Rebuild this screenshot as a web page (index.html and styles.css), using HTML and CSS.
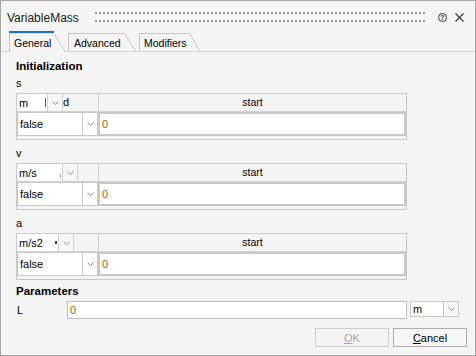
FILE: index.html
```html
<!DOCTYPE html>
<html>
<head>
<meta charset="utf-8">
<title>VariableMass</title>
<link rel="stylesheet" href="styles.css">
</head>
<body>
<div class="window">
  <div class="titlebar">
    <span class="title">VariableMass</span>
    <div class="grip"></div>
    <span class="help">?</span>
    <svg class="close" width="9" height="9" viewBox="0 0 9 9"><path d="M0.5 0.5L8.5 8.5M8.5 0.5L0.5 8.5" stroke="#333" stroke-width="1.1" fill="none"/></svg>
  </div>

  <div class="tabbar">
    <div class="tab tab-general">
      <svg class="tab-shape" width="57" height="21" viewBox="0 0 57 21"><path d="M0.5 21V2H44.5L56.5 21" fill="#f4f4f4" stroke="#c6c6c6"/><rect x="0" y="0" width="45" height="2" fill="#1f72b8"/></svg>
      <span class="tab-label">General</span>
    </div>
    <div class="tab tab-advanced">
      <svg class="tab-shape" width="68" height="18" viewBox="0 0 68 18"><path d="M0.5 18V0.5H56.5L67.5 18" fill="#f4f4f4" stroke="#c6c6c6"/></svg>
      <span class="tab-label">Advanced</span>
    </div>
    <div class="tab tab-modifiers">
      <svg class="tab-shape" width="61" height="18" viewBox="0 0 61 18"><path d="M0.5 18V0.5H50.5L60.5 18" fill="#f4f4f4" stroke="#c6c6c6"/></svg>
      <span class="tab-label">Modifiers</span>
    </div>
  </div>

  <div class="content">
    <div class="section-title">Initialization</div>

    <div class="var-label">s</div>
    <div class="vtable">
      <div class="vhead">
        <div class="vcol1">
          <div class="unit-combo w-s"><span>m</span><span class="tick"></span></div>
          <div class="unit-arrow"><svg width="7" height="4" viewBox="0 0 7 4"><path d="M0.5 0.5L3.5 3.5L6.5 0.5" fill="none" stroke="#8c8c8c"/></svg></div>
          <div class="hdr-fixed">d</div>
        </div>
        <div class="hdr-start">start</div>
      </div>
      <div class="vrow">
        <div class="fixed-combo">false</div>
        <div class="fixed-arrow"><svg width="7" height="4" viewBox="0 0 7 4"><path d="M0.5 0.5L3.5 3.5L6.5 0.5" fill="none" stroke="#8c8c8c"/></svg></div>
        <div class="value-cell">0</div>
      </div>
    </div>

    <div class="var-label gap">v</div>
    <div class="vtable">
      <div class="vhead">
        <div class="vcol1">
          <div class="unit-combo w-v"><span>m/s</span><span class="mark-green"></span></div>
          <div class="unit-arrow"><svg width="7" height="4" viewBox="0 0 7 4"><path d="M0.5 0.5L3.5 3.5L6.5 0.5" fill="none" stroke="#8c8c8c"/></svg></div>
          <div class="hdr-fixed"></div>
        </div>
        <div class="hdr-start">start</div>
      </div>
      <div class="vrow">
        <div class="fixed-combo">false</div>
        <div class="fixed-arrow"><svg width="7" height="4" viewBox="0 0 7 4"><path d="M0.5 0.5L3.5 3.5L6.5 0.5" fill="none" stroke="#8c8c8c"/></svg></div>
        <div class="value-cell">0</div>
      </div>
    </div>

    <div class="var-label gap">a</div>
    <div class="vtable">
      <div class="vhead">
        <div class="vcol1">
          <div class="unit-combo w-a"><span>m/s2</span><span class="mark-red"></span></div>
          <div class="unit-arrow"><svg width="7" height="4" viewBox="0 0 7 4"><path d="M0.5 0.5L3.5 3.5L6.5 0.5" fill="none" stroke="#8c8c8c"/></svg></div>
          <div class="hdr-fixed"></div>
        </div>
        <div class="hdr-start">start</div>
      </div>
      <div class="vrow">
        <div class="fixed-combo">false</div>
        <div class="fixed-arrow"><svg width="7" height="4" viewBox="0 0 7 4"><path d="M0.5 0.5L3.5 3.5L6.5 0.5" fill="none" stroke="#8c8c8c"/></svg></div>
        <div class="value-cell">0</div>
      </div>
    </div>

    <div class="section-title params">Parameters</div>
    <div class="param-row">
      <div class="param-name">L</div>
      <div class="param-input">0</div>
      <div class="param-unit">m</div>
      <div class="param-arrow"><svg width="7" height="4" viewBox="0 0 7 4"><path d="M0.5 0.5L3.5 3.5L6.5 0.5" fill="none" stroke="#8c8c8c"/></svg></div>
    </div>

    <div class="buttons">
      <button class="btn btn-disabled" disabled><u>O</u>K</button>
      <button class="btn"><u>C</u>ancel</button>
    </div>
  </div>
</div>
</body>
</html>
```

FILE: styles.css
```css
* { box-sizing: border-box; }
html, body { margin: 0; padding: 0; }
body {
  font-family: "Liberation Sans", Arial, sans-serif;
  font-size: 11px;
  color: #000;
  background: #f4f4f4;
}
.window {
  width: 476px;
  height: 356px;
  border: 1px solid #a6a6a6;
  background: #f4f4f4;
  display: flex;
  flex-direction: column;
}

/* title bar */
.titlebar {
  height: 30px;
  display: flex;
  align-items: center;
  padding: 0 11px 0 6px;
}
.title {
  font-size: 12px;
  color: #1b1b1b;
  margin-top: 4px;
}
.grip {
  flex: 1;
  height: 10px;
  margin: 2px 11px 0 15px;
  background-image: radial-gradient(circle at center, #9a9a9a 1px, transparent 1.3px);
  background-size: 4px 8px;
  background-position: 0 -3px;
}
.help {
  width: 9px;
  height: 9px;
  border: 1px solid #333;
  border-radius: 50%;
  font-size: 7px;
  line-height: 7px;
  font-weight: bold;
  text-align: center;
  color: #333;
  margin-top: 3px;
}
.close { margin-left: 8px; margin-top: 3px; }

/* tabs */
.tabbar {
  height: 21px;
  border-bottom: 1px solid #d6d6d6;
  display: flex;
  align-items: flex-end;
  padding-left: 8px;
}
.tab {
  position: relative;
  height: 18px;
  font-size: 10.5px;
  line-height: 14px;
}
.tab-shape { position: absolute; left: 0; top: 0; }
.tab-label { position: relative; }
.tab-general { width: 57px; height: 21px; margin-bottom: -1px; padding: 5px 0 0 5px; }
.tab-advanced { width: 68px; margin-left: 2px; padding: 3px 0 0 6px; }
.tab-modifiers { width: 61px; margin-left: 3px; padding: 3px 0 0 5px; }

/* content */
.content {
  flex: 1;
  display: flex;
  flex-direction: column;
  padding: 7px 0 0 15px;
}
.section-title {
  font-weight: bold;
  font-size: 11.5px;
  line-height: 14px;
  height: 14px;
}
.section-title.params { margin-top: 4px; }
.var-label {
  line-height: 14px;
  height: 14px;
  margin-top: 3px;
}
.var-label.gap { margin-top: 6px; }

.vtable {
  width: 391px;
  height: 47px;
  margin-top: 3px;
  border: 1px solid #c8c8c8;
  background: #f4f4f4;
}
.vhead {
  display: flex;
  height: 18px;
  border-bottom: 1px solid #d2d2d2;
}
.vcol1 {
  width: 82px;
  display: flex;
  overflow: hidden;
  border-right: 1px solid #d2d2d2;
}
.unit-combo {
  background: #fff;
  display: flex;
  align-items: center;
  justify-content: space-between;
  padding: 0 1px 0 2px;
  border-right: 1px solid #d2d2d2;
}
.w-s { width: 31px; }
.w-v { width: 46px; }
.w-a { width: 42px; }
.tick { width: 1px; height: 9px; background: #555; }
.mark-green { width: 1px; height: 2px; background: #4a9a3a; margin-top: 6px; }
.mark-red { width: 2px; height: 3px; background: #8a1a1a; }
.unit-arrow {
  width: 15px;
  display: flex;
  align-items: center;
  justify-content: center;
  border-right: 1px solid #d2d2d2;
  background: #f7f7f7;
}
.hdr-fixed {
  flex: 1;
  line-height: 17px;
  overflow: hidden;
}
.hdr-start {
  flex: 1;
  text-align: center;
  line-height: 17px;
  font-size: 10.5px;
}
.vrow {
  display: flex;
  height: 24px;
}
.fixed-combo {
  width: 66px;
  background: #fff;
  border: 1px solid #c8c8c8;
  padding-left: 2px;
  line-height: 22px;
}
.fixed-arrow {
  width: 15px;
  background: #fff;
  border: 1px solid #c8c8c8;
  border-left: none;
  display: flex;
  align-items: center;
  justify-content: center;
}
.value-cell {
  flex: 1;
  background: #fff;
  border: 2px solid #c8c8c8;
  padding-left: 2px;
  line-height: 20px;
  color: #a65a10;
}

/* parameters */
.param-row {
  display: flex;
  height: 18px;
  margin-top: 3px;
}
.param-name {
  width: 51px;
  padding-left: 1px;
  line-height: 18px;
}
.param-input {
  width: 340px;
  background: #fff;
  border: 1px solid #bcbcbc;
  padding-left: 2px;
  line-height: 16px;
  color: #a65a10;
}
.param-unit {
  width: 34px;
  margin-left: 3px;
  height: 16px;
  background: #fff;
  border: 1px solid #c8c8c8;
  padding-left: 2px;
  line-height: 14px;
}
.param-arrow {
  width: 15px;
  height: 16px;
  border: 1px solid #c8c8c8;
  border-left: none;
  background: #f7f7f7;
  display: flex;
  align-items: center;
  justify-content: center;
}

/* buttons */
.buttons {
  display: flex;
  justify-content: flex-end;
  gap: 4px;
  margin-top: 9px;
  padding-right: 8px;
}
.btn {
  width: 74px;
  height: 19px;
  padding: 0;
  font-family: "Liberation Sans", Arial, sans-serif;
  font-size: 11px;
  color: #000;
  background: #f6f6f6;
  border: 1px solid #adadad;
  border-radius: 0;
}
.btn-disabled {
  color: #a3a3a3;
  border-color: #cdcdcd;
  background: #f4f4f4;
}
.btn u { text-underline-offset: 1px; }
```
